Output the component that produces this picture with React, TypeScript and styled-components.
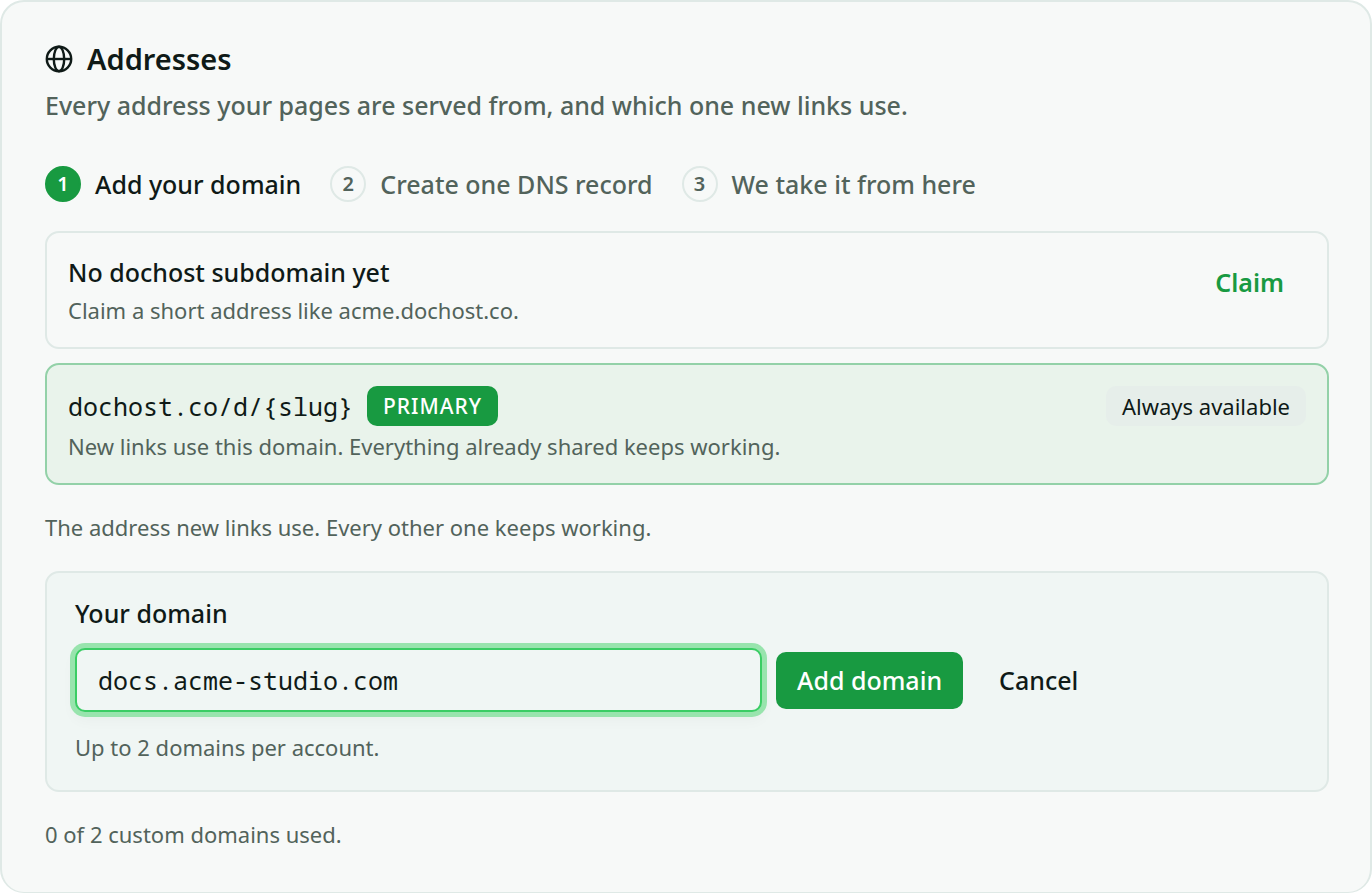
import React from "react";
import styled, { createGlobalStyle, css } from "styled-components";

const color = {
  card: "#f7f9f8",
  panel: "#f0f6f4",
  line: "#dfe9e6",
  ink: "#0f1a17",
  muted: "#52635b",
  green: "#189a41",
};

const GlobalStyle = createGlobalStyle`
  *, *::before, *::after { box-sizing: border-box; }
  body {
    margin: 0;
    background: #fff;
    color: ${color.ink};
    font-family: "Noto Sans", "Open Sans", sans-serif;
    font-size: 25px;
    line-height: 36px;
    font-weight: 500;
  }
  h2, p, ol { margin: 0; padding: 0; }
  button, input { font: inherit; color: inherit; margin: 0; }
`;

const mono = css`
  font-family: "Noto Sans Mono", "Noto Sans Mono CJK SC", "DejaVu Sans Mono", monospace;
  font-weight: 400;
`;

const Card = styled.section`
  display: flex;
  flex-direction: column;
  padding: 37px 41px 40px 43px;
  background: ${color.card};
  border: 2px solid ${color.line};
  border-bottom-width: 1px;
  border-radius: 24px;
`;

const Heading = styled.h2`
  display: flex;
  align-items: center;
  gap: 14px;
  font-size: 29px;
  line-height: 40px;
  font-weight: 600;
`;

const Lead = styled.p`
  margin-top: 8px;
  color: ${color.muted};
`;

const Steps = styled.ol`
  display: flex;
  flex-wrap: wrap;
  gap: 29px;
  margin-top: 43px;
  list-style: none;
`;

const Step = styled.li<{ $active?: boolean }>`
  display: flex;
  align-items: center;
  gap: 14px;
  color: ${(p) => (p.$active ? color.ink : color.muted)};
`;

const StepNumber = styled.span<{ $active?: boolean }>`
  display: flex;
  align-items: center;
  justify-content: center;
  width: 36px;
  height: 36px;
  border: 2px solid ${(p) => (p.$active ? color.green : color.line)};
  border-radius: 50%;
  background: ${(p) => (p.$active ? color.green : "transparent")};
  color: ${(p) => (p.$active ? "#fff" : color.muted)};
  font-size: 20px;
  font-weight: 600;
`;

const AddressList = styled.div`
  display: flex;
  flex-direction: column;
  gap: 14px;
  margin-top: 29px;
`;

const AddressRow = styled.div<{ $primary?: boolean }>`
  display: flex;
  align-items: flex-start;
  justify-content: space-between;
  gap: 14px;
  padding: 21px 21px 19px;
  border: 2px solid ${(p) => (p.$primary ? "#93d1a8" : color.line)};
  border-radius: 14px;
  background: ${(p) => (p.$primary ? "#e9f3eb" : "transparent")};
`;

const AddressText = styled.div`
  display: flex;
  flex-direction: column;
  gap: 2px;
`;

const AddressName = styled.div`
  display: flex;
  align-items: center;
  gap: 14px;
`;

const Slug = styled.span`
  ${mono}
`;

const Note = styled.p`
  color: ${color.muted};
  font-size: 22px;
  line-height: 36px;
  font-weight: 420;
`;

const ListNote = styled(Note)`
  margin-top: 24px;
`;

const Badge = styled.span<{ $solid?: boolean }>`
  padding: 0 16px;
  border-radius: 10px;
  background: ${(p) => (p.$solid ? color.green : "#e6eeea")};
  color: ${(p) => (p.$solid ? "#fff" : color.ink)};
  font-size: ${(p) => (p.$solid ? "21px" : "22px")};
  letter-spacing: ${(p) => (p.$solid ? "1px" : "normal")};
  font-weight: ${(p) => (p.$solid ? 500 : 420)};
  line-height: 40px;
`;

const Button = styled.button<{ $kind: "solid" | "plain" | "accent" }>`
  padding: 0 ${(p) => (p.$kind === "solid" ? "21px" : "22px")};
  border: 0;
  border-radius: 10px;
  line-height: 57px;
  cursor: pointer;
  background: ${(p) => (p.$kind === "solid" ? color.green : "transparent")};
  color: ${(p) => ({ solid: "#fff", plain: color.ink, accent: color.green }[p.$kind])};
  font-weight: ${(p) => (p.$kind === "accent" ? 600 : 500)};
`;

const DomainForm = styled.form`
  display: flex;
  flex-direction: column;
  margin-top: 26px;
  padding: 22px 28px 25px;
  border: 2px solid ${color.line};
  border-radius: 14px;
  background: ${color.panel};
`;

const FormRow = styled.div`
  display: flex;
  align-items: center;
  gap: 14px;
  margin: 17px 0;
`;

const DomainInput = styled.input`
  ${mono}
  flex: 1;
  min-width: 0;
  max-width: 687px;
  height: 64px;
  padding: 0 21px;
  border: 2px solid #3acd64;
  border-radius: 10px;
  outline: none;
  background: ${color.panel};
  box-shadow: 0 0 0 5px #98e4ad, 0 7px 14px 2px rgba(15, 26, 23, 0.03);
`;

export default function App() {
  return (
    <>
      <GlobalStyle />
      <Card>
        <Heading>
          <svg width="28" height="28" viewBox="0 0 28 28" fill="none" stroke="currentColor" strokeWidth="2.4" aria-hidden="true">
            <circle cx="14" cy="14" r="12.2" />
            <ellipse cx="14" cy="14" rx="5.2" ry="12.2" />
            <path d="M1.8 14h24.4" />
          </svg>
          Addresses
        </Heading>
        <Lead>Every address your pages are served from, and which one new links use.</Lead>

        <Steps>
          <Step $active>
            <StepNumber $active>1</StepNumber>
            Add your domain
          </Step>
          <Step>
            <StepNumber>2</StepNumber>
            Create one DNS record
          </Step>
          <Step>
            <StepNumber>3</StepNumber>
            We take it from here
          </Step>
        </Steps>

        <AddressList>
          <AddressRow>
            <AddressText>
              <AddressName>No dochost subdomain yet</AddressName>
              <Note>Claim a short address like acme.dochost.co.</Note>
            </AddressText>
            <Button type="button" $kind="accent">Claim</Button>
          </AddressRow>
          <AddressRow $primary>
            <AddressText>
              <AddressName>
                <Slug>{"dochost.co/d/{slug}"}</Slug>
                <Badge $solid>PRIMARY</Badge>
              </AddressName>
              <Note>New links use this domain. Everything already shared keeps working.</Note>
            </AddressText>
            <Badge>Always available</Badge>
          </AddressRow>
        </AddressList>
        <ListNote>The address new links use. Every other one keeps working.</ListNote>

        <DomainForm onSubmit={(e) => e.preventDefault()}>
          <label htmlFor="domain">Your domain</label>
          <FormRow>
            <DomainInput id="domain" type="text" defaultValue="docs.acme-studio.com" spellCheck={false} />
            <Button type="submit" $kind="solid">Add domain</Button>
            <Button type="button" $kind="plain">Cancel</Button>
          </FormRow>
          <Note>Up to 2 domains per account.</Note>
        </DomainForm>
        <ListNote>0 of 2 custom domains used.</ListNote>
      </Card>
    </>
  );
}
